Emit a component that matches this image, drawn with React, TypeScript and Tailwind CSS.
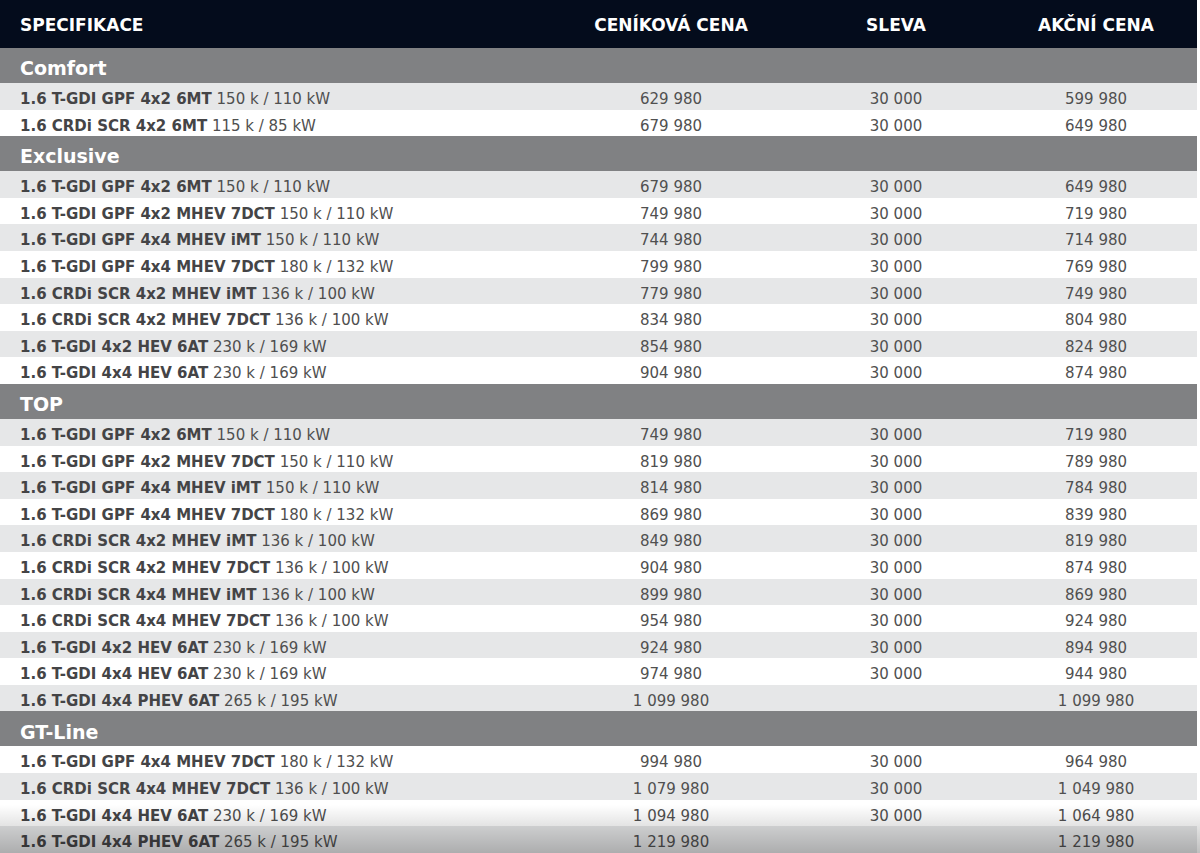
import React from 'react'

interface Row {
  name: string
  power: string
  list: string
  discount: string
  promo: string
}

interface Section {
  title: string
  rows: Row[]
}

const r = (name: string, power: string, list: string, discount: string, promo: string): Row => ({
  name,
  power,
  list,
  discount,
  promo,
})

const sections: Section[] = [
  {
    title: 'Comfort',
    rows: [
      r('1.6 T-GDI GPF 4x2 6MT', '150 k / 110 kW', '629 980', '30 000', '599 980'),
      r('1.6 CRDi SCR 4x2 6MT', '115 k / 85 kW', '679 980', '30 000', '649 980'),
    ],
  },
  {
    title: 'Exclusive',
    rows: [
      r('1.6 T-GDI GPF 4x2 6MT', '150 k / 110 kW', '679 980', '30 000', '649 980'),
      r('1.6 T-GDI GPF 4x2 MHEV 7DCT', '150 k / 110 kW', '749 980', '30 000', '719 980'),
      r('1.6 T-GDI GPF 4x4 MHEV iMT', '150 k / 110 kW', '744 980', '30 000', '714 980'),
      r('1.6 T-GDI GPF 4x4 MHEV 7DCT', '180 k / 132 kW', '799 980', '30 000', '769 980'),
      r('1.6 CRDi SCR 4x2 MHEV iMT', '136 k / 100 kW', '779 980', '30 000', '749 980'),
      r('1.6 CRDi SCR 4x2 MHEV 7DCT', '136 k / 100 kW', '834 980', '30 000', '804 980'),
      r('1.6 T-GDI 4x2 HEV 6AT', '230 k / 169 kW', '854 980', '30 000', '824 980'),
      r('1.6 T-GDI 4x4 HEV 6AT', '230 k / 169 kW', '904 980', '30 000', '874 980'),
    ],
  },
  {
    title: 'TOP',
    rows: [
      r('1.6 T-GDI GPF 4x2 6MT', '150 k / 110 kW', '749 980', '30 000', '719 980'),
      r('1.6 T-GDI GPF 4x2 MHEV 7DCT', '150 k / 110 kW', '819 980', '30 000', '789 980'),
      r('1.6 T-GDI GPF 4x4 MHEV iMT', '150 k / 110 kW', '814 980', '30 000', '784 980'),
      r('1.6 T-GDI GPF 4x4 MHEV 7DCT', '180 k / 132 kW', '869 980', '30 000', '839 980'),
      r('1.6 CRDi SCR 4x2 MHEV iMT', '136 k / 100 kW', '849 980', '30 000', '819 980'),
      r('1.6 CRDi SCR 4x2 MHEV 7DCT', '136 k / 100 kW', '904 980', '30 000', '874 980'),
      r('1.6 CRDi SCR 4x4 MHEV iMT', '136 k / 100 kW', '899 980', '30 000', '869 980'),
      r('1.6 CRDi SCR 4x4 MHEV 7DCT', '136 k / 100 kW', '954 980', '30 000', '924 980'),
      r('1.6 T-GDI 4x2 HEV 6AT', '230 k / 169 kW', '924 980', '30 000', '894 980'),
      r('1.6 T-GDI 4x4 HEV 6AT', '230 k / 169 kW', '974 980', '30 000', '944 980'),
      r('1.6 T-GDI 4x4 PHEV 6AT', '265 k / 195 kW', '1 099 980', '', '1 099 980'),
    ],
  },
  {
    title: 'GT-Line',
    rows: [
      r('1.6 T-GDI GPF 4x4 MHEV 7DCT', '180 k / 132 kW', '994 980', '30 000', '964 980'),
      r('1.6 CRDi SCR 4x4 MHEV 7DCT', '136 k / 100 kW', '1 079 980', '30 000', '1 049 980'),
      r('1.6 T-GDI 4x4 HEV 6AT', '230 k / 169 kW', '1 094 980', '30 000', '1 064 980'),
      r('1.6 T-GDI 4x4 PHEV 6AT', '265 k / 195 kW', '1 219 980', '', '1 219 980'),
    ],
  },
]

const cols = 'grid grid-cols-[545px_252px_198px_202px]'

export default function App() {
  // striping runs on across the sections, not per section
  let rowIdx = 0

  return (
    <div
      className="relative w-[1200px] h-[853px] overflow-hidden bg-white"
      style={{ fontFamily: '"DejaVu Sans", Verdana, sans-serif' }}
    >
      <div className="w-[1197px]">
        {/* Header */}
        <div className={`${cols} h-[48px] items-center pt-[3px] bg-[#040c1c] text-white text-[17px] font-bold`}>
          <div className="pl-5">SPECIFIKACE</div>
          <div className="text-center">CENÍKOVÁ CENA</div>
          <div className="text-center">SLEVA</div>
          <div className="text-center">AKČNÍ CENA</div>
        </div>

        {sections.map((section) => (
          <div key={section.title}>
            <div className="h-[35px] flex items-center pt-[6px] pl-5 bg-[#808183] text-white text-[19px] font-bold">
              {section.title}
            </div>
            {section.rows.map((row, i) => {
              const striped = rowIdx++ % 2 === 0
              return (
                <div
                  key={i}
                  className={`${cols} h-[26.6px] items-center pt-[5px] text-[15px] ${
                    striped ? 'bg-[#e6e7e8]' : 'bg-white'
                  }`}
                >
                  <div className="pl-5 whitespace-nowrap text-[#4f4f4f]">
                    <span className="font-bold text-[#444446]">{row.name}</span> {row.power}
                  </div>
                  <div className="text-center text-[#505050]">{row.list}</div>
                  <div className="text-center text-[#505050]">{row.discount}</div>
                  <div className="text-center text-[#505050]">{row.promo}</div>
                </div>
              )
            })}
          </div>
        ))}
      </div>

      {/* fade at the bottom edge */}
      <div className="pointer-events-none absolute left-0 right-0 bottom-0 h-[48px] bg-gradient-to-b from-transparent to-black/25" />
    </div>
  )
}
